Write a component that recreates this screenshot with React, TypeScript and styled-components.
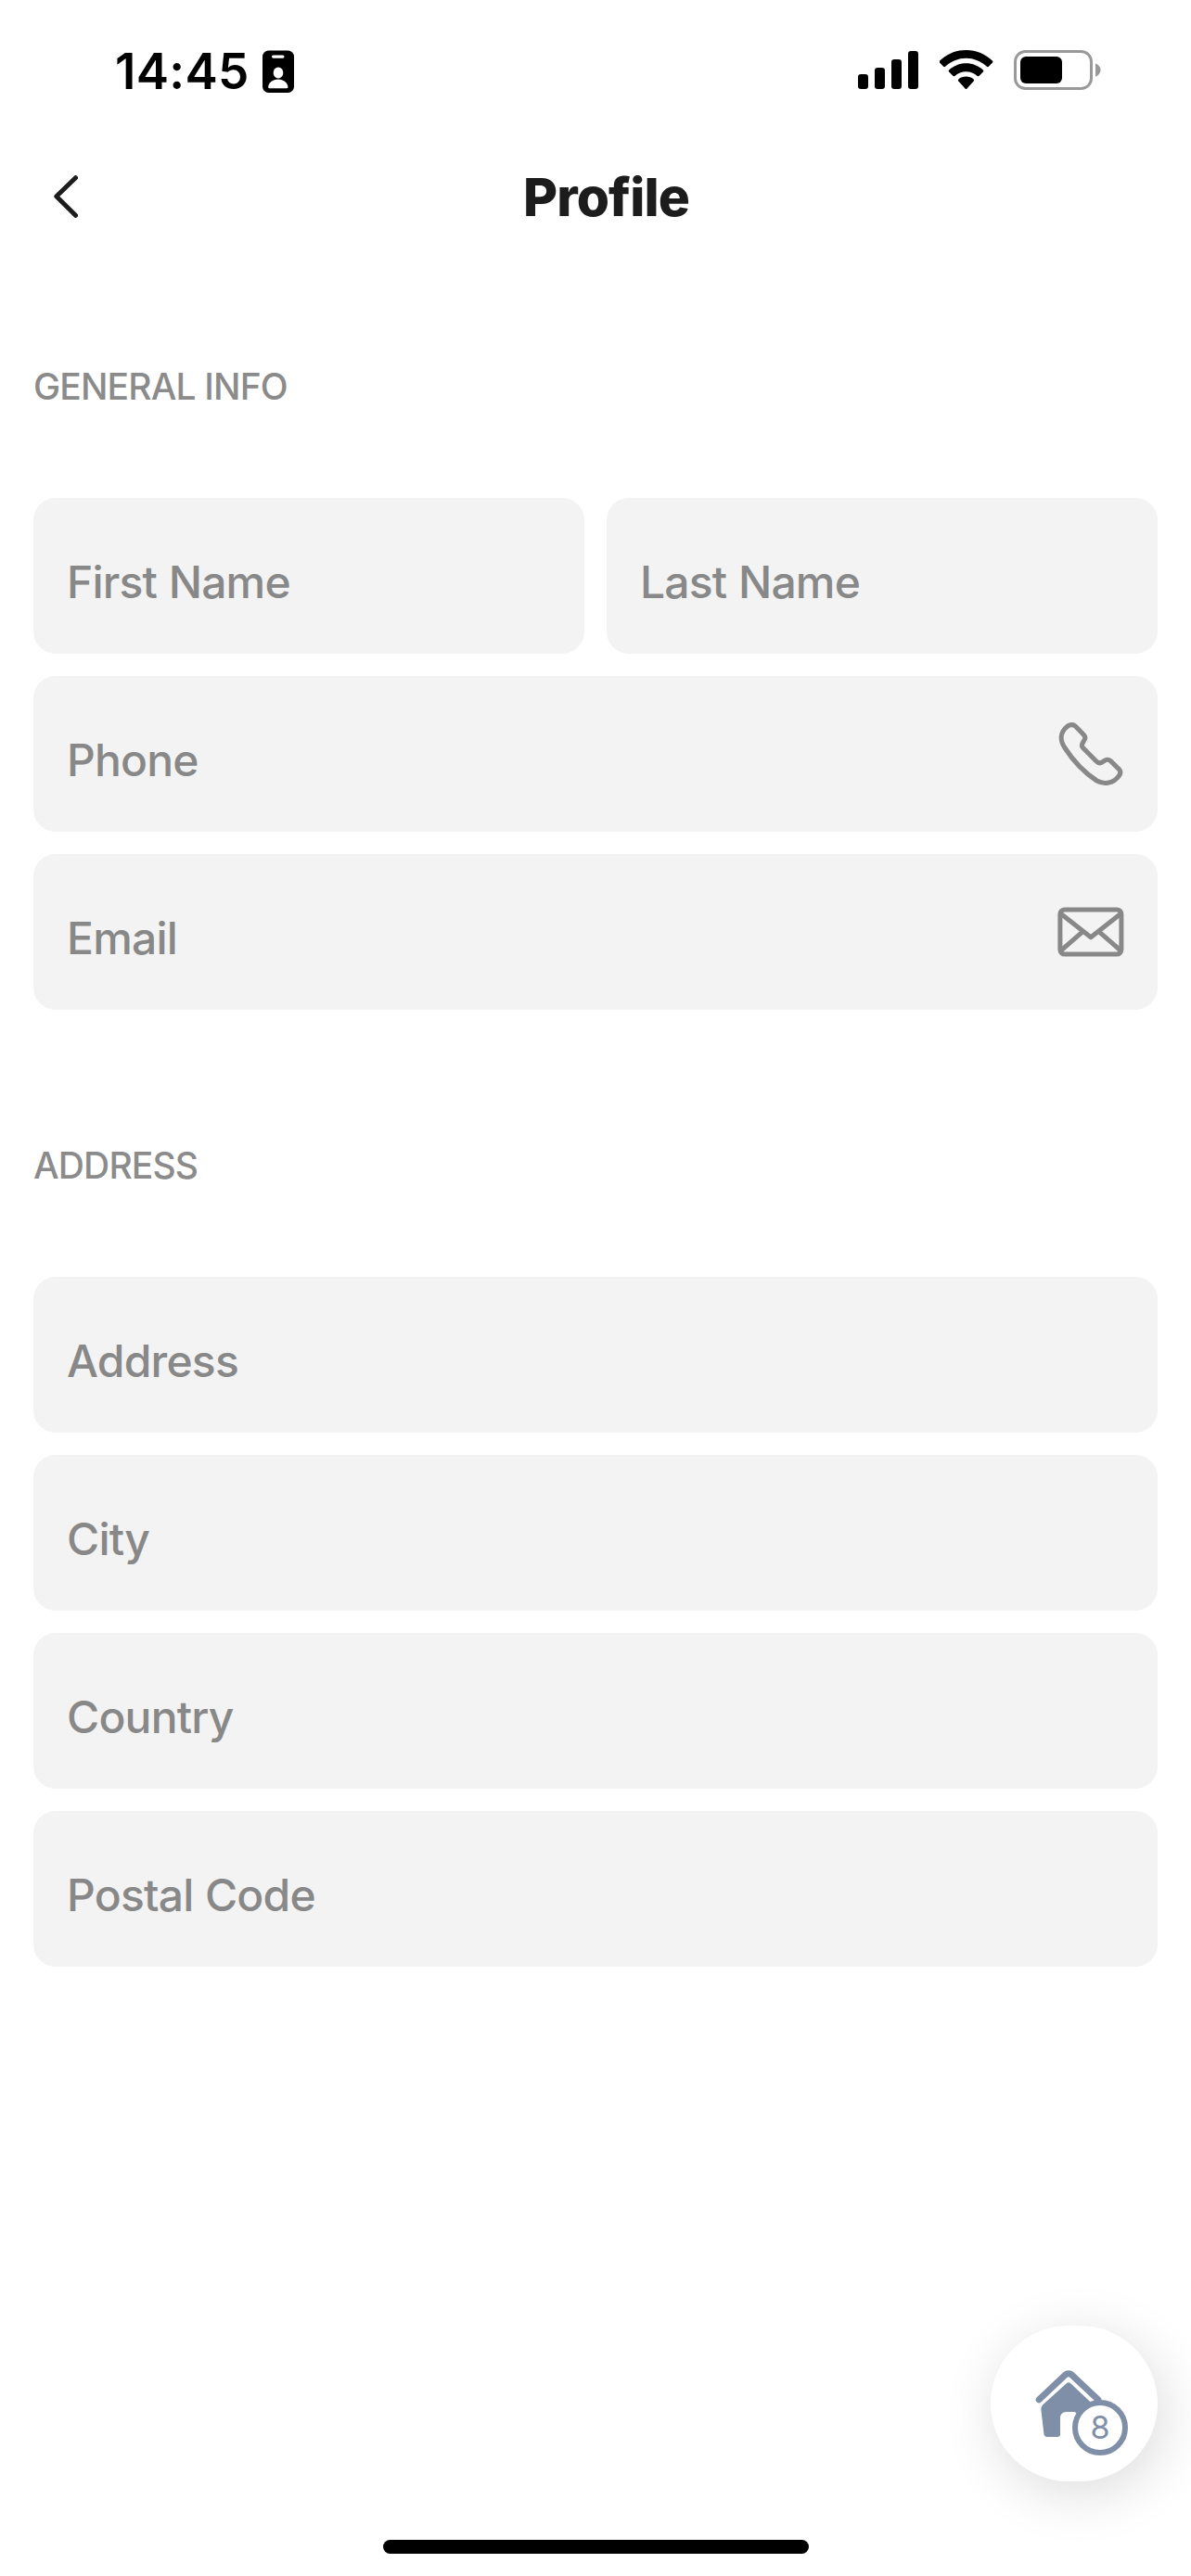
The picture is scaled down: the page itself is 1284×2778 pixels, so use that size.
import React from "react";
import styled, { createGlobalStyle } from "styled-components";

const GlobalStyle = createGlobalStyle`
  * { box-sizing: border-box; }
  body { margin: 0; background: #fff; }
  svg { display: block; flex: none; }
`;

const Screen = styled.div`
  position: relative;
  display: flex;
  flex-direction: column;
  width: 1284px;
  height: 2778px;
  overflow: hidden;
  background: #fff;
  color: #1c1c1c;
  font-family: Inter, "Liberation Sans", sans-serif;
`;

const StatusBar = styled.div`
  display: flex;
  justify-content: space-between;
  align-items: flex-start;
  height: 152px;
  padding: 54px 97px 0 124px;
  color: #000;
`;

const StatusGroup = styled.div<{ $gap: number }>`
  display: flex;
  align-items: flex-start;
  gap: ${(p) => p.$gap}px;
`;

const Clock = styled.span`
  width: 143px;
  font-size: 53px;
  font-weight: 600;
  line-height: 46px;
  letter-spacing: 0.3px;
  white-space: nowrap;
`;

const Header = styled.header`
  display: grid;
  grid-template-columns: 120px 1fr 97px;
  align-items: center;
  height: 97px;
  padding-top: 23px;
`;

const BackButton = styled.button`
  display: flex;
  align-items: center;
  height: 74px;
  padding: 0 0 0 57px;
  border: 0;
  background: none;
  color: #1c1c1c;
`;

const Title = styled.h1`
  margin: 0;
  padding-top: 1px;
  font-size: 57px;
  font-weight: 800;
  line-height: 73px;
  letter-spacing: -0.9px;
  text-align: center;
`;

const Section = styled.section`
  display: flex;
  flex-direction: column;
  gap: 96px;
  padding: 144px 36px 0;
`;

const SectionTitle = styled.h2`
  margin: 0;
  color: #8b8b8b;
  font-size: 39px;
  font-weight: 500;
  line-height: 48px;
  letter-spacing: -0.85px;
  text-transform: uppercase;
`;

const Fields = styled.div`
  display: grid;
  grid-template-columns: 1fr 1fr;
  gap: 24px;
`;

const Field = styled.div<{ $wide?: boolean }>`
  display: flex;
  align-items: center;
  justify-content: space-between;
  grid-column: ${(p) => (p.$wide ? "1 / -1" : "auto")};
  height: 168px;
  padding: 0 36px;
  border-radius: 24px;
  background: #f3f3f3;
  color: #888;
`;

const FieldLabel = styled.span`
  padding-top: 13px;
  font-size: 48px;
  font-weight: 500;
  line-height: 60px;
  letter-spacing: -0.8px;
  word-spacing: 0.5px;
  white-space: nowrap;
`;

const HomeButton = styled.button`
  position: absolute;
  right: 36px;
  bottom: 102px;
  display: flex;
  align-items: flex-start;
  width: 180px;
  height: 168px;
  padding: 48px 0 0 48px;
  border: 0;
  border-radius: 84px;
  background: #fff;
  box-shadow: 6px 12px 60px rgba(0, 0, 0, 0.14);
  color: #808fa8;
`;

const Badge = styled.span`
  position: absolute;
  left: 88px;
  top: 80px;
  display: flex;
  align-items: center;
  justify-content: center;
  width: 60px;
  height: 60px;
  border: 6px solid #808fa8;
  border-radius: 50%;
  background: #fff;
  font-family: Inter, "Liberation Sans", sans-serif;
  font-size: 34px;
  font-weight: 400;
  line-height: 48px;
`;

const HomeIndicator = styled.div`
  width: 459px;
  height: 15px;
  margin: auto auto 24px 413px;
  border-radius: 8px;
  background: #000;
`;

const IdCardIcon = () => (
  <svg width="34" height="46" viewBox="0 0 34 46">
    <rect y="0.5" width="34" height="45.5" rx="6.5" fill="#000" />
    <rect x="10" y="5.5" width="13.5" height="3.2" rx="1.6" fill="#fff" />
    <ellipse cx="17" cy="24.5" rx="5.3" ry="6" fill="#fff" />
    <path d="M6.200 40c0-5 5-8.600 10.600-8.600S27.400 35 27.400 40c0 .8-.5 1.200-1.300 1.200H7.500c-.8 0-1.300-.4-1.300-1.200Z" fill="#fff" />
  </svg>
);

const SignalIcon = () => (
  <svg width="65" height="43" viewBox="0 0 65 43">
    <rect x="0" y="26" width="11" height="16" rx="3.200" />
    <rect x="18" y="19" width="11" height="23" rx="3.200" />
    <rect x="36" y="10" width="11" height="32" rx="3.200" />
    <rect x="54" y="1" width="11" height="41" rx="3.200" />
  </svg>
);

const WifiIcon = () => (
  <svg width="58" height="43" viewBox="0 0 58 43">
    <path d="M28.500 0C39.500 0 49.500 4.300 56.900 11.500c.7.700.7 1.500.1 2.100l-4.100 4.200c-.6.600-1.400.6-2 0C44.800 12.100 37 8.700 28.500 8.700S12.200 12.100 6.100 17.800c-.6.600-1.400.6-2 0L0 13.600c-.6-.6-.6-1.400.1-2.100C7.500 4.300 17.500 0 28.500 0Z" />
    <path d="M28.500 14.300c7 0 13.400 2.700 18.300 7.200.7.600.7 1.500.1 2.100L42.700 27.800c-.6.600-1.300.6-2 .1-3.300-2.900-7.500-4.700-12.200-4.700s-8.900 1.800-12.200 4.700c-.7.500-1.400.5-2-.1l-4.200-4.200c-.6-.6-.6-1.500.1-2.100 4.900-4.500 11.300-7.200 18.300-7.200Z" />
    <path d="M28.500 28.600c3 0 5.900 1 8.100 2.800.7.600.7 1.400.1 2.100l-7.200 8c-.6.700-1.400.7-2 0l-7.200-8c-.6-.7-.6-1.500.1-2.100 2.200-1.800 5.100-2.800 8.100-2.800Z" />
  </svg>
);

const BatteryIcon = () => (
  <svg width="94" height="43" viewBox="0 0 94 43">
    <rect x="1.500" y="1.500" width="82" height="40" rx="11" fill="none" stroke="#999" strokeWidth="3" />
    <rect x="7" y="7" width="45" height="29" rx="6" />
    <path d="M88 14.500c3.200 1 5.500 3.800 5.500 7s-2.300 6-5.500 7Z" fill="#999" />
  </svg>
);

const BackIcon = () => (
  <svg width="28" height="46" viewBox="0 0 28 46" fill="none" stroke="currentColor" strokeWidth="5" strokeLinecap="round" strokeLinejoin="round">
    <path d="M24.500 2.700 3.800 22.800 24.500 43.300" />
  </svg>
);

const PhoneIcon = () => (
  <svg width="72" height="72" viewBox="0 0 72 72" fill="none" stroke="currentColor" strokeWidth="5.100" strokeLinejoin="round">
    <path d="M10.500 6.500C13 4.200 17.200 3.900 19.500 6.200L28 15C30 17 30.200 19.700 28.600 21.800 27 24.200 25 26.800 27.300 29.200L42 44C44.500 46.500 47.500 45.800 49.700 44 52 42 55 41.500 57.300 43.700L66.200 52.300C68.200 54.500 68.200 57.300 66.300 59.700 60.500 67.500 51 69.700 42.500 65 29.500 56.500 17 43.500 8 29.500 2.300 21 3 12.500 10.500 6.500Z" />
  </svg>
);

const MailIcon = () => (
  <svg width="72" height="54" viewBox="0 0 72 54" fill="none" stroke="currentColor" strokeWidth="5" strokeLinejoin="round" strokeLinecap="round">
    <rect x="2.900" y="2.900" width="66" height="48.200" rx="5" />
    <path d="m4.500 8 31.500 24.700L67.500 8M4.500 46.500l22-19.200M67.500 46.500l-22-19.200" />
  </svg>
);

const HouseIcon = () => (
  <svg width="72" height="73" viewBox="0 0 72 73">
    <path d="M4.200 31.800 32.300 5.300c2.200-2 5.200-2 7.400 0l28.100 26.500" fill="none" stroke="currentColor" strokeWidth="7" strokeLinecap="round" />
    <path d="M33.800 14.200c1.300-1.200 3.100-1.200 4.400 0L64 38.500l-3 30c-.2 2-1 3.500-3 3.500H46V50c0-2.800-2-5-5-5h-7c-5 0-7 3-7 7v17.500c0 1.500-1.200 2.500-2.700 2.500H12.800c-2 0-3.200-1.300-3.400-3.200L6.400 43c-.2-2.500.5-4.400 2.200-6Z" fill="currentColor" />
  </svg>
);

const generalFields = [
  { label: "First Name" },
  { label: "Last Name" },
  { label: "Phone", wide: true, icon: <PhoneIcon /> },
  { label: "Email", wide: true, icon: <MailIcon /> },
];

const addressFields = ["Address", "City", "Country", "Postal Code"];

export default function App() {
  return (
    <>
      <GlobalStyle />
      <Screen>
        <StatusBar>
          <StatusGroup $gap={16}>
            <Clock>14:45</Clock>
            <IdCardIcon />
          </StatusGroup>
          <StatusGroup $gap={22.5}>
            <SignalIcon />
            <WifiIcon />
            <BatteryIcon />
          </StatusGroup>
        </StatusBar>
        <Header>
          <BackButton aria-label="Back">
            <BackIcon />
          </BackButton>
          <Title>Profile</Title>
        </Header>
        <Section>
          <SectionTitle>General info</SectionTitle>
          <Fields>
            {generalFields.map((f) => (
              <Field key={f.label} $wide={f.wide}>
                <FieldLabel>{f.label}</FieldLabel>
                {f.icon}
              </Field>
            ))}
          </Fields>
        </Section>
        <Section>
          <SectionTitle>Address</SectionTitle>
          <Fields>
            {addressFields.map((label) => (
              <Field key={label} $wide>
                <FieldLabel>{label}</FieldLabel>
              </Field>
            ))}
          </Fields>
        </Section>
        <HomeIndicator />
        <HomeButton aria-label="Home">
          <HouseIcon />
          <Badge>8</Badge>
        </HomeButton>
      </Screen>
    </>
  );
}
